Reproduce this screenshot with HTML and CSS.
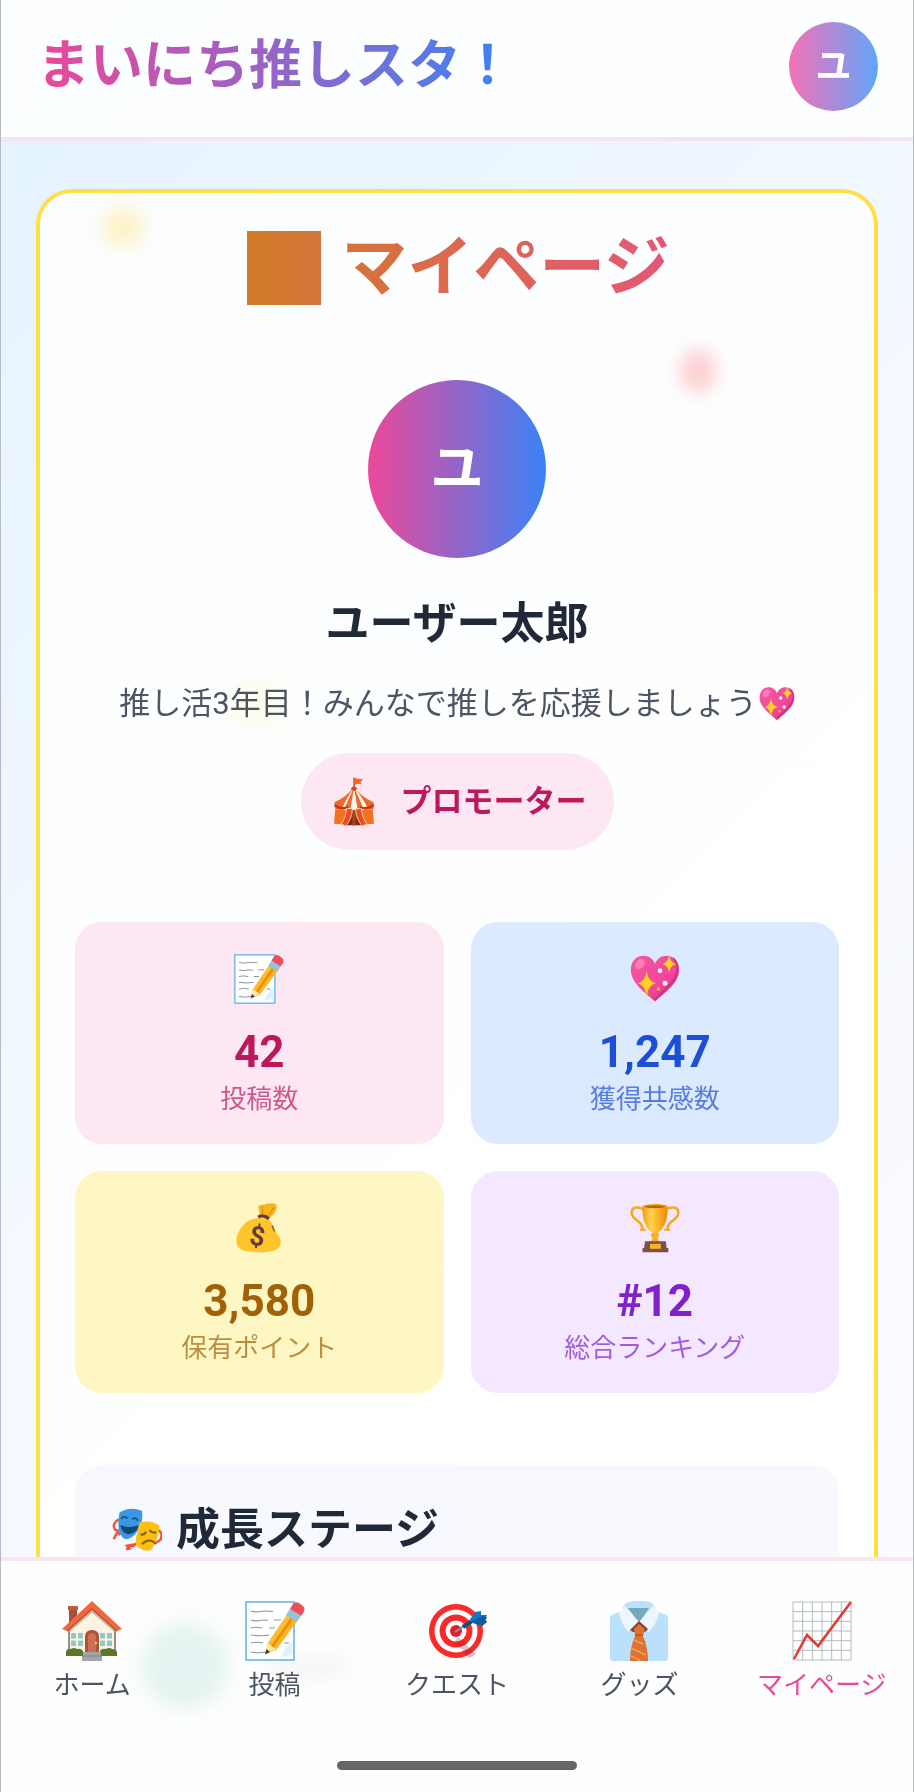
FILE: index.html
```html
<!DOCTYPE html>
<html lang="ja">
<head>
<meta charset="utf-8">
<meta name="viewport" content="width=device-width, initial-scale=1">
<title>まいにち推しスタ！</title>
<link rel="stylesheet" href="styles.css">
</head>
<body>
<svg class="sprite" aria-hidden="true">
  <defs>
    <linearGradient id="pencil" x1="0" y1="0" x2="1" y2="1"><stop offset="0" stop-color="#ffd54f"/><stop offset="1" stop-color="#f59a0c"/></linearGradient>
    <linearGradient id="cup" x1="0" y1="0" x2="1" y2="0"><stop offset="0" stop-color="#f79a0b"/><stop offset=".35" stop-color="#ffd34d"/><stop offset=".6" stop-color="#fdb52a"/><stop offset="1" stop-color="#f08a00"/></linearGradient>
    <linearGradient id="heartfill" x1="0" y1="0" x2="1" y2="1"><stop offset="0" stop-color="#f857a0"/><stop offset=".6" stop-color="#f0479a"/><stop offset="1" stop-color="#d02c72"/></linearGradient>
  </defs>
  <symbol id="memo" viewBox="0 0 60 60">
    <rect x="1" y="1" width="48" height="58" fill="#fff" stroke="#64b5f0" stroke-width="1.6"/>
    <path d="M39 49 47 40V54L36 56Z" fill="#e1f1fb"/>
    <path d="M6 10q5 1.500 9 .5t13 0M6 19q5 1.500 9 .5t8 0M29 19h7M6 27q5-1.500 11 0M24 27h6M6 34q9 1.500 18 0M6 42q5-1.500 12 0M6 51q7 1.500 15 0M39 42h5" fill="none" stroke="#8b979e" stroke-width="1.200"/>
    <path d="M22 43 43 12 53 19 31 49 21 53Z" fill="url(#pencil)"/>
    <path d="M27 46 48 16" stroke="#f08f00" stroke-width="3"/>
    <path d="M22 42 31 48 21 53Z" fill="#ffe8b0"/>
    <path d="M21.500 48 25 51 20 53.500Z" fill="#3b3b3b"/>
    <path d="M41 14 45 8 56 15 52 21Z" fill="#90c5da"/>
    <path d="M45 8 48 3Q50 0 54 2L58 5Q61 8 58 12L56 15Z" fill="#f04c5c"/>
  </symbol>
  <symbol id="heart" viewBox="0 0 60 60">
    <path d="M30 57C18 46 1 35 1 19 1 8 8 2 16 2c7 0 12 4 14 10C32 6 37 2 44 2c8 0 15 6 15 17 0 16-17 27-29 38Z" fill="url(#heartfill)"/>
    <path d="M52 5c8 8 6 22-4 32L30 55" fill="none" stroke="#c22768" stroke-width="2" opacity=".7"/>
    <ellipse cx="12" cy="12" rx="5" ry="7" fill="#ff8fc4" opacity=".7" transform="rotate(35 12 12)"/>
    <path d="M20 20q1.500 13 11 15-9.500 2-11 16-1.500-14-11-16 9.500-2 11-15ZM47 1q1 9 8 11-7 2-8 11-1-9-8-11 7-2 8-11Z" fill="#ffd21f"/>
    <circle cx="36" cy="20" r="2.800" fill="#fff3f8"/><circle cx="42" cy="35" r="3" fill="#fff3f8"/><circle cx="34" cy="42" r="2.200" fill="#ffb13b"/>
  </symbol>
  <symbol id="trophy" viewBox="0 0 60 60">
    <path d="M16 7Q2 2 2 12c0 9 14 9 13 20M44 7q14-5 14 5c0 9-14 9-13 20" fill="none" stroke="#f9a81a" stroke-width="3"/>
    <path d="M12 32h7M41 32h7" stroke="#f9a81a" stroke-width="2.500"/>
    <path d="M15 4q15-6 30 0c1 15-4 27-11 31q-4 2-8 0C19 31 14 19 15 4Z" fill="url(#cup)"/>
    <ellipse cx="30" cy="4" rx="15" ry="2.500" fill="#f6a019"/><ellipse cx="30" cy="4.500" rx="12" ry="1.500" fill="#a66a16"/>
    <path d="M26 36h8l1 4-2 1q0 5 6 6H21q6-1 6-6l-2-1Z" fill="#f8af25"/>
    <path d="M18 46h25l1 8h2v5H15v-5h2Z" fill="#7b5148"/><rect x="24" y="49" width="13" height="6" fill="#f5b526"/>
  </symbol>
  <symbol id="masks" viewBox="0 0 60 52">
    <path d="M8 13q-9 6-4 13l4 1M2 37l5-9 3 4M55 26q7 3 3 12l-5 3M28 43l-10 2 3 3-4 1M24 46l8-5" fill="none" stroke="#f0533f" stroke-width="3"/>
    <path d="M9 5Q21-3 36 3q2 16-6 25-6 9-14 9Q4 32 9 5Z" fill="#3b96e4"/>
    <path d="M10 20q10 5 22 0-2 10-12 11-8 0-10-11Z" fill="#124a76"/>
    <path d="M11 13q3-5 8-1M24 13q5-3 7 2" fill="none" stroke="#12537f" stroke-width="2"/>
    <path d="M33 17q14-4 24 4-1 17-10 29-7 3-15-3-5-3-3-12Z" fill="#fcbf12"/>
    <path d="M34 31q4 2 7-3M45 26q3 4 8 3M36 43q9-9 17 0" fill="none" stroke="#85620e" stroke-width="2.500"/>
  </symbol>
  <symbol id="house" viewBox="0 0 60 60">
    <rect x="7" y="5" width="8" height="18" fill="#a84f3b"/><rect x="6" y="5" width="10" height="4" fill="#bf5d42"/>
    <path d="M7 25 30 7 53 25V54H7Z" fill="#fdf3e3"/>
    <path d="M7 27V54M53 27V54" stroke="#756b64" stroke-width="1.500"/>
    <path d="M7 29 30 9 53 29" stroke="#c6b8a6" stroke-width="4" fill="none"/>
    <path d="M30 0 60 28 55 30 30 8 5 30 0 28Z" fill="#f1683b"/><path d="m5 30 25-22 25 22" fill="none" stroke="#bd4927" stroke-width="1.200"/>
    <path d="M9 32h12v13H9ZM38 32h12v13H38Z" fill="#91c9cb"/><path d="M15 32v13M9 38.500h12M44 32v13M38 38.500h12" stroke="#fdf3e3" stroke-width="2"/>
    <path d="M23 52V36q0-7 7-7t7 7v16Z" fill="#ad5339"/><path d="M26 51V36q0-4 4-4t4 4v15" fill="#cb7152"/><circle cx="34" cy="42" r="1.200" fill="#ffc33a"/>
    <path d="M4 55v-4q1-4 5-3 3-2 6 0 4-1 6 2v5ZM38 55v-5q2-3 6-2 3-2 6 0 4 0 5 3v4Z" fill="#5b772a"/>
    <path d="M21 51h18v4h1v5H20v-5h1Z" fill="#a0a5a8"/><path d="M20 55h20" stroke="#7d8386"/>
  </symbol>
  <symbol id="target" viewBox="0 0 60 60">
    <circle cx="29" cy="30" r="27" fill="#fb2a29"/><circle cx="29" cy="30" r="21.500" fill="#fff"/><circle cx="29" cy="30" r="16.500" fill="#fb2a29"/><circle cx="29" cy="30" r="10.500" fill="#fff"/><circle cx="29" cy="30" r="6" fill="#e11f2c"/>
    <path d="m31 36 18 17q-3 3-7 4L28 40Z" fill="#801839" opacity=".25"/>
    <path d="m28 31 15-10" stroke="#7d97a6" stroke-width="2"/><path d="m36 26 9-6" stroke="#07527e" stroke-width="4"/>
    <path d="m42 20 6-9 6-1v4l6 0-2 4 2 3-5 4Z" fill="#1976c5"/><path d="m43 21 13-6 4 1-2 4 2 1-5 4Z" fill="#0b5da0"/>
  </symbol>
  <symbol id="shirt" viewBox="0 0 60 60">
    <path d="M1 17q0-3 4-4l8-3Q14 0 26 0h8q12 0 13 10l8 3q4 1 4 4v40q0 3-3 3H4q-3 0-3-3Z" fill="#bbe0fb"/>
    <path d="M19 7h21L30 22Z" fill="#73a9b9"/>
    <path d="M16 5 30 21 19 31Q12 22 10 12ZM44 5 30 21 40 31Q48 22 50 12Z" fill="#edf6fc"/>
    <path d="m30 20 9 8-3 3H24l-3-2Z" fill="#844229"/>
    <path d="m30 23 6 5-2 7q5 11 5 25H21q0-14 5-25l-1-7Z" fill="#dd7138"/>
    <path d="m25 39 9 4M22 47l15 7M22 55l10 5" stroke="#f3a443" stroke-width="1.500"/><path d="M26 34h8" stroke="#b55025" stroke-width="1.500"/>
  </symbol>
  <symbol id="chart" viewBox="0 0 60 60">
    <path d="M1 1h58v58H1ZM10.700 1v58M20.300 1v58M30 1v58M39.700 1v58M49.300 1v58M1 10.700h58M1 20.300h58M1 30h58M1 39.700h58M1 49.300h58" fill="#fff" stroke="#a9b4ba" stroke-width=".9"/>
    <path d="M2 58 15 34 26 45 59 1" fill="none" stroke="#e23a35" stroke-width="2.600"/>
  </symbol>
  <symbol id="tent" viewBox="0 0 50 60">
    <path d="M25 1v14" stroke="#8b4a37" stroke-width="1.500"/><path d="M25 1q5 2 11 1l-3 4 1 3q-5-2-9 1Z" fill="#f4662e"/>
    <path d="M3 34h44l2 22-13 1H14L1 56Z" fill="#f2701e"/><path d="M25 34 15 58h20Z" fill="#7a2d13"/><path d="M25 36v22" stroke="#a8441d" stroke-width="4"/>
    <path d="M25 12Q16 24 2 30q-2 5 2 9 5 1 7-1 4 4 9 0 5 3 10 0 5 4 9 0 4 2 8 0 4-4 1-9Q34 24 25 12Z" fill="#fff6e9"/>
    <path d="M25 12Q16 24 2 30q-2 5 2 9 4 1 6-1Q16 26 25 12ZM25 12 14 37q3 3 7 0ZM25 12l4 25q4 3 7 0ZM25 12q9 12 23 18 3 5-1 9l-5-1Q36 26 25 12Z" fill="#f0662b"/>
    <path d="M21 14q4-6 8 0l-4 3Z" fill="#dc4520"/>
    <path d="M2 34q8 6 16 2M32 36q8 4 16-2" stroke="#c8341f" stroke-width="3" fill="none"/>
    <path d="M23 38q0 12-8 21l-4-2-3 1q7-7 8-20ZM27 38q0 12 8 21l4-2 3 1q-7-7-8-20Z" fill="#ee4b25" stroke="#ffe3c6" stroke-width="1"/>
  </symbol>
</svg>
<div class="app">
  <header class="header">
    <div class="brand">まいにち推しスタ！</div>
    <button class="avatar avatar-small" type="button">ユ</button>
  </header>
  <main class="content">
    <section class="card">
      <h1 class="title"><span class="title-mark"></span>マイページ</h1>
      <div class="profile">
        <div class="avatar avatar-large">ユ</div>
        <h2 class="name">ユーザー太郎</h2>
        <p class="bio">推し活3年目！みんなで推しを応援しましょう<svg class="icon icon-text"><use href="#heart"/></svg></p>
        <div class="badge"><svg class="icon icon-tent"><use href="#tent"/></svg><span>プロモーター</span></div>
      </div>
      <div class="stats">
        <div class="stat pink"><svg class="icon icon-stat"><use href="#memo"/></svg><div class="value">42</div><div class="label">投稿数</div></div>
        <div class="stat blue"><svg class="icon icon-stat"><use href="#heart"/></svg><div class="value">1,247</div><div class="label">獲得共感数</div></div>
        <div class="stat yellow">
          <svg class="icon icon-stat" viewBox="0 0 60 60">
            <path d="M31 15 29 4q4-3 8-2 3-3 6-1 4-2 8 1 2 7-7 15Z" fill="#fbb41d"/>
            <path d="M33 4q2 4 1 9M42 15 48 5" stroke="#e38b06" stroke-width="1.500" fill="none"/>
            <path d="M29 18C13 19 3 34 3 46c0 11 11 13 27 13 15 0 26-2 26-12 0-7-5-9-8-16-2-6-4-9-7-12Z" fill="#fdc52b"/>
            <path d="M46 27q1 5 3 7" stroke="#ab6a0c" stroke-width="2" fill="none"/>
            <path d="M29 17q6-4 13 2" fill="none" stroke="#633b40" stroke-width="4"/>
            <text class="bag-sign" x="28" y="51" text-anchor="middle" transform="rotate(8 28 40)">$</text>
          </svg>
          <div class="value">3,580</div><div class="label">保有ポイント</div>
        </div>
        <div class="stat purple"><svg class="icon icon-stat"><use href="#trophy"/></svg><div class="value">#12</div><div class="label">総合ランキング</div></div>
      </div>
      <section class="stage">
        <h2 class="stage-title"><svg class="icon icon-stat"><use href="#masks"/></svg>成長ステージ</h2>
      </section>
    </section>
    <i class="glow glow-gold"></i>
    <i class="glow glow-rose"></i>
    <i class="glow glow-lemon"></i>
  </main>
  <footer class="footer">
    <i class="glow glow-green"></i>
    <i class="glow glow-gray"></i>
    <nav class="tabs">
      <a class="tab" href="#home"><svg class="icon icon-tab"><use href="#house"/></svg>ホーム</a>
      <a class="tab" href="#post"><svg class="icon icon-tab"><use href="#memo"/></svg>投稿</a>
      <a class="tab" href="#quest"><svg class="icon icon-tab"><use href="#target"/></svg>クエスト</a>
      <a class="tab" href="#goods"><svg class="icon icon-tab"><use href="#shirt"/></svg>グッズ</a>
      <a class="tab active" href="#mypage" aria-current="page"><svg class="icon icon-tab"><use href="#chart"/></svg>マイページ</a>
    </nav>
    <div class="handle"></div>
  </footer>
</div>
</body>
</html>
```
FILE: styles.css
```css
* { box-sizing: border-box; }
body {
  margin: 0;
  font-family: Roboto, "Noto Sans CJK JP", sans-serif;
  color: #1f2937;
}
h1, h2, p { margin: 0; }
.sprite { position: absolute; width: 0; height: 0; }
.bag-sign { font: bold 32px Roboto, sans-serif; fill: #633b40; }
.icon { display: block; flex: none; overflow: visible; }

.app {
  display: flex;
  flex-direction: column;
  height: 100vh;
  overflow: hidden;
  border: solid #b9bdc2;
  border-width: 0 1px;
  background: linear-gradient(135deg, #e3f2ff 0%, #f3f9ff 45%, #f9faff 75%, #fcfcff 100%);
}

.header {
  display: flex;
  justify-content: space-between;
  align-items: center;
  padding: 22px 35px 26px 36px;
  border-bottom: 4px solid #f8e3f1;
  background: rgba(255, 255, 255, .85);
}
.brand {
  font-size: 53px;
  line-height: 80px;
  font-weight: 700;
  padding-bottom: 2px;
  color: transparent;
  background: linear-gradient(90deg, #ec4899, #3b82f6);
  background-clip: text;
  -webkit-background-clip: text;
}
.avatar {
  display: flex;
  align-items: center;
  justify-content: center;
  border: 0;
  padding: 0;
  border-radius: 50%;
  color: #fff;
  font-family: inherit;
  font-weight: 700;
}
.avatar-small {
  width: 89px;
  height: 89px;
  padding-bottom: 8px;
  font-size: 36px;
  background: linear-gradient(90deg, #f472b6, #60a5fa);
}
.avatar-large {
  width: 178px;
  height: 178px;
  padding-bottom: 10px;
  font-size: 53px;
  background: linear-gradient(90deg, #ec4899, #3b82f6);
}

.content {
  position: relative;
  flex: 1;
  min-height: 0;
  overflow: hidden;
  padding: 48px 35px 0;
}
.card {
  padding: 35px;
  border: 4px solid #fde047;
  border-radius: 36px;
  background: rgba(255, 255, 255, .85);
}
.title {
  display: flex;
  justify-content: center;
  align-items: center;
  gap: 20px;
  padding-left: 3px;
  font-size: 66px;
  line-height: 80px;
  font-weight: 700;
  color: transparent;
  background: linear-gradient(90deg, #ca8a04, #ec4899);
  background-clip: text;
  -webkit-background-clip: text;
}
.title-mark {
  width: 74px;
  height: 74px;
  background: linear-gradient(90deg, #d07b25, #d4743a);
}
.profile {
  display: flex;
  flex-direction: column;
  align-items: center;
  padding-top: 72px;
}
.name {
  margin-top: 35px;
  font-size: 44px;
  line-height: 62px;
}
.bio {
  display: flex;
  align-items: center;
  margin-top: 27px;
  font-size: 31px;
  line-height: 44px;
  color: #4b5563;
}
.icon-text { width: 36px; height: 36px; margin-left: 2px; }
.badge {
  display: flex;
  align-items: center;
  gap: 24px;
  margin-top: 27px;
  padding: 22px 27px 22px 30px;
  border-radius: 49px;
  font-size: 31px;
  line-height: 53px;
  font-weight: 700;
  color: #be185d;
  background: #fce7f3;
}
.icon-tent { width: 46px; height: 50px; }

.stats {
  display: grid;
  grid-template-columns: 1fr 1fr;
  gap: 27px;
  margin-top: 72px;
}
.stat {
  display: flex;
  flex-direction: column;
  align-items: center;
  height: 222px;
  padding-top: 32px;
  border-radius: 27px;
}
.icon-stat { width: 50px; height: 50px; }
.value {
  margin-top: 22px;
  font-size: 44px;
  line-height: 53px;
  font-weight: 700;
}
.label {
  font-size: 26px;
  line-height: 40px;
  opacity: .7;
}
.pink { color: #be185d; background: #fce7f3; }
.blue { color: #1d4ed8; background: #dbeafe; }
.yellow { color: #a16207; background: #fef7c3; }
.purple { color: #7e22ce; background: #f3e8ff; }

.stage {
  margin-top: 72px;
  padding: 34px 37px;
  border-radius: 27px;
  background: #f7f9fe;
}
.stage-title {
  display: flex;
  align-items: center;
  gap: 14px;
  font-size: 44px;
  line-height: 62px;
}

.footer {
  position: relative;
  border-top: 4px solid #f8e6f1;
  padding: 40px 0 22px;
  background: #fefefe;
}
.tabs { position: relative; display: grid; grid-template-columns: repeat(5, 1fr); }
.tab {
  display: flex;
  flex-direction: column;
  align-items: center;
  gap: 6px;
  font-size: 26px;
  line-height: 36px;
  white-space: nowrap;
  text-decoration: none;
  color: #4b5563;
}
.active { color: #ec4899; }
.icon-tab { width: 60px; height: 60px; }
.handle {
  width: 240px;
  height: 9px;
  margin: 58px auto 0;
  border-radius: 5px;
  background: #666;
}

.glow { position: absolute; border-radius: 50%; pointer-events: none; mix-blend-mode: multiply; }
.glow-gold { left: 11%; top: 66px; width: 44px; height: 40px; background: #fff3c9; filter: blur(9px); }
.glow-rose { left: 74%; top: 208px; width: 36px; height: 44px; margin-left: 4px; background: #ffd0d0; filter: blur(9px); }
.glow-lemon { left: 25%; top: 540px; width: 56px; height: 46px; background: #fffce0; opacity: .7; filter: blur(12px); }
.glow-green { left: 15%; top: 62px; width: 86px; height: 86px; margin-left: 4px; background: radial-gradient(#e8f1fb, #e2f5ea 60%); filter: blur(11px); }
.glow-gray { left: 29%; top: 94px; width: 88px; height: 24px; background: #f8f6f7; filter: blur(8px); }
```
